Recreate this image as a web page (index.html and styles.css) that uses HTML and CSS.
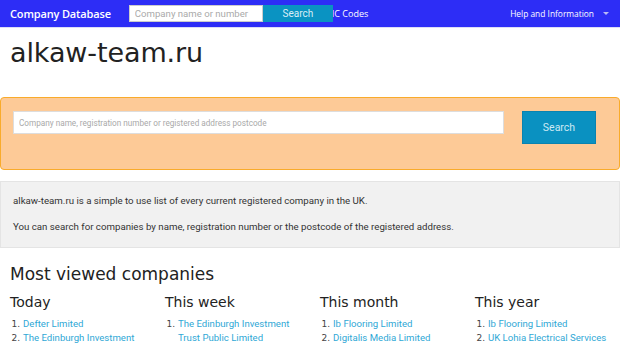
FILE: index.html
```html
<!DOCTYPE html>
<html>
<head>
<meta charset="utf-8">
<link rel="stylesheet" href="styles.css">
</head>
<body>
<nav class="topbar">
  <a class="brand" href="#">Company Database</a>
  <form class="nav-search">
    <input type="text" placeholder="Company name or number">
    <button type="button">Search</button>
  </form>
  <a class="nav-link sic" href="#">SIC Codes</a>
  <a class="nav-link help" href="#">Help and Information <span class="caret"></span></a>
</nav>

<main class="page">
  <h1 class="site-title">alkaw-team.ru</h1>

  <div class="search-panel">
    <input class="big-input" type="text" placeholder="Company name, registration number or registered address postcode">
    <button class="big-button" type="button">Search</button>
  </div>

  <div class="intro">
    <p>alkaw-team.ru is a simple to use list of every current registered company in the UK.</p>
    <p>You can search for companies by name, registration number or the postcode of the registered address.</p>
  </div>

  <h2 class="section-title">Most viewed companies</h2>
  <div class="columns">
    <div class="col">
      <h3>Today</h3>
      <ol>
        <li><a href="#">Defter Limited</a></li>
        <li><a href="#">The Edinburgh Investment</a></li>
      </ol>
    </div>
    <div class="col">
      <h3>This week</h3>
      <ol>
        <li><a href="#">The Edinburgh Investment Trust Public Limited</a></li>
      </ol>
    </div>
    <div class="col">
      <h3>This month</h3>
      <ol>
        <li><a href="#">Ib Flooring Limited</a></li>
        <li><a href="#">Digitalis Media Limited</a></li>
      </ol>
    </div>
    <div class="col">
      <h3>This year</h3>
      <ol>
        <li><a href="#">Ib Flooring Limited</a></li>
        <li><a href="#">UK Lohia Electrical Services</a></li>
      </ol>
    </div>
  </div>
</main>
</body>
</html>
```

FILE: styles.css
```css
* { box-sizing: border-box; }
html, body { margin: 0; padding: 0; }
body {
  font-family: Roboto, "Liberation Sans", sans-serif;
  color: #222;
  background: #fff;
  overflow: hidden;
}

.topbar {
  height: 28px;
  background: #2d2df6;
  border-bottom: 1px solid #dcdcf8;
  display: flex;
  align-items: center;
  padding: 0 10px;
}
.brand {
  color: #fff;
  text-decoration: none;
  font-family: "Open Sans", sans-serif;
  font-weight: 600;
  font-size: 11px;
  letter-spacing: -0.15px;
}
.nav-search {
  display: flex;
  margin-left: 18px;
  height: 17px;
  margin-top: -1px;
}
.nav-search input {
  width: 134px;
  height: 17px;
  border: 1px solid #ccc;
  padding: 0 5px;
  font-family: Roboto, sans-serif;
  font-size: 9.6px;
  background: #fff;
  outline: none;
}
.nav-search input::placeholder { color: #aaa; }
.nav-search button {
  position: relative;
  z-index: 2;
  width: 70px;
  height: 17px;
  border: 0;
  background: #0a93c2;
  color: #d9eef7;
  font-family: Roboto, sans-serif;
  font-size: 10px;
  padding: 0;
}
.nav-link {
  color: #fff;
  text-decoration: none;
  font-family: "Open Sans", sans-serif;
  font-size: 9px;
}
.sic { margin-left: -6px; }
.help {
  margin-left: auto;
  margin-right: 1px;
  display: flex;
  align-items: center;
  font-size: 8.4px;
}
.caret {
  display: inline-block;
  width: 0; height: 0;
  border-left: 3px solid transparent;
  border-right: 3px solid transparent;
  border-top: 3px solid #b9b9f5;
  margin-left: 9px;
}

.site-title {
  font-family: "DejaVu Sans", sans-serif;
  font-weight: normal;
  font-size: 27px;
  color: #222;
  margin: 8px 10px 0;
  line-height: 34px;
  letter-spacing: -0.1px;
}

.search-panel {
  margin: 27px 0 0 0;
  height: 73px;
  background: #fdca97;
  border: 1px solid #f9ab2b;
  border-radius: 4px;
  display: flex;
  align-items: flex-start;
  padding: 13px 23px 0 12px;
}
.big-input {
  width: 491px;
  height: 23px;
  border: 1px solid #ddd;
  background: #fff;
  padding: 0 5px;
  font-family: Roboto, sans-serif;
  font-size: 8.2px;
  outline: none;
}
.big-input::placeholder { color: #a9a9a9; }
.big-button {
  margin-left: auto;
  width: 74px;
  height: 33px;
  border: 1px solid #0a83b0;
  background: #0a91c1;
  color: #cde9f4;
  font-family: Roboto, sans-serif;
  font-size: 10.5px;
  padding: 0;
}

.intro {
  margin-top: 11px;
  height: 67px;
  background: #f1f1f1;
  border: 1px solid #e4e4e4;
  padding: 13px 12px 0;
  font-family: Roboto, sans-serif;
  font-size: 9.7px;
  color: #333;
}
.intro p { margin: 0 0 14px; line-height: 12px; }

.section-title {
  font-family: "DejaVu Sans", sans-serif;
  font-weight: normal;
  font-size: 17px;
  margin: 15px 10px 0;
  line-height: 22px;
}
.columns {
  display: grid;
  grid-template-columns: repeat(4, 155px);
  padding-left: 10px;
  margin-top: 8px;
}
.col h3 {
  font-family: "DejaVu Sans", sans-serif;
  font-weight: normal;
  font-size: 14px;
  margin: 0;
  line-height: 18px;
}
.col ol {
  margin: 6px 0 0;
  padding: 0 0 0 13px;
  font-family: "DejaVu Sans", sans-serif;
  font-size: 9px;
  color: #444;
  width: 135px;
}
.col li { line-height: 14px; }
.col li a {
  font-family: Roboto, sans-serif;
  font-size: 9.6px;
  color: #2fa8d6;
  text-decoration: none;
}
```
